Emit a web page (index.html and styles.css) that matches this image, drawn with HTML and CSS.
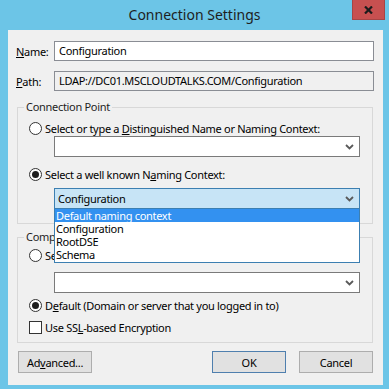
FILE: index.html
```html
<!DOCTYPE html>
<html lang="en">
<head>
  <meta charset="UTF-8" />
  <title>Connection Settings</title>
  <link rel="stylesheet" href="styles.css">
</head>
<body>

  <div class="window">
    <div class="titlebar">
      <span class="title">Connection Settings</span>
      <div class="close-btn">
        <svg width="9" height="8" viewBox="0 0 9 8"><path d="M1 0.5 L8 7.5 M8 0.5 L1 7.5" stroke="#1b1b1b" stroke-width="2.2" fill="none"/></svg>
      </div>
    </div>

    <div class="client">
      <div class="field-row">
        <span class="field-label"><u>N</u>ame:</span>
        <div class="textbox">Configuration</div>
      </div>
      <div class="field-row">
        <span class="field-label"><u>P</u>ath:</span>
        <div class="textbox readonly">LDAP://DC01.MSCLOUDTALKS.COM/Configuration</div>
      </div>

      <fieldset class="group group-top">
        <legend>Connection Point</legend>
        <div class="option opt-1">
          <span class="radio"></span>
          <span>Select or type a <u>D</u>istinguished Name or Naming Context:</span>
        </div>
        <div class="combo combo-1">
          <span></span>
          <svg class="chevron" width="9" height="6" viewBox="0 0 9 6"><path d="M1 1 L4.5 4.5 L8 1" stroke="#5a5a5a" stroke-width="1.8" fill="none"/></svg>
        </div>
        <div class="option opt-2">
          <span class="radio checked"></span>
          <span>Select a well known N<u>a</u>ming Context:</span>
        </div>
        <div class="combo-wrap">
          <div class="combo active">
            <span>Configuration</span>
            <svg class="chevron" width="9" height="6" viewBox="0 0 9 6"><path d="M1 1 L4.5 4.5 L8 1" stroke="#5a5a5a" stroke-width="1.8" fill="none"/></svg>
          </div>
          <ul class="dropdown">
            <li class="selected">Default naming context</li>
            <li>Configuration</li>
            <li>RootDSE</li>
            <li>Schema</li>
          </ul>
        </div>
      </fieldset>

      <fieldset class="group group-bottom">
        <legend>Computer</legend>
        <div class="option opt-3">
          <span class="radio"></span>
          <span>Select or type a domain or server:</span>
        </div>
        <div class="combo combo-3">
          <span></span>
          <svg class="chevron" width="9" height="6" viewBox="0 0 9 6"><path d="M1 1 L4.5 4.5 L8 1" stroke="#5a5a5a" stroke-width="1.8" fill="none"/></svg>
        </div>
        <div class="option opt-4">
          <span class="radio checked"></span>
          <span>D<u>e</u>fault (Domain or server that you logged in to)</span>
        </div>
        <div class="option opt-5">
          <span class="checkbox"></span>
          <span>Use SS<u>L</u>-based Encryption</span>
        </div>
      </fieldset>

      <div class="button-row">
        <button class="btn">Ad<u>v</u>anced...</button>
        <button class="btn btn-default">OK</button>
        <button class="btn">Cancel</button>
      </div>
    </div>
  </div>

</body>
</html>
```

FILE: styles.css
```css
body {
  margin: 0;
  background: #6cc5e7;
  font-family: 'Noto Sans', sans-serif;
  font-size: 11px;
  letter-spacing: -0.3px;
  color: #000;
}

.window {
  width: 389px;
  height: 389px;
  overflow: hidden;
}

.titlebar {
  position: relative;
  height: 30px;
  display: flex;
  align-items: center;
  justify-content: center;
}

.title {
  font-size: 14px;
  letter-spacing: 0;
  color: #1e1e1e;
  margin-top: -1px;
}

.close-btn {
  position: absolute;
  top: 0;
  right: 4px;
  width: 33px;
  height: 20px;
  box-sizing: border-box;
  background: #c75050;
  border: 1px solid #a64545;
  border-top: none;
  display: flex;
  align-items: center;
  justify-content: center;
}

.client {
  margin: 0 6px 0 8px;
  height: 355px;
  box-sizing: border-box;
  background: #f0f0f0;
  padding: 11px 9px 0 8px;
}

.field-row {
  display: flex;
  align-items: center;
  height: 20px;
  margin-top: 10px;
}

.field-row:first-child {
  margin-top: 0;
}

.field-label {
  width: 38px;
}

.textbox {
  flex: 1;
  height: 20px;
  box-sizing: border-box;
  border: 1px solid #8a8d94;
  background: #fff;
  padding: 0 4px;
  line-height: 18px;
}

.textbox.readonly {
  background: #f0f0f0;
}

.group {
  margin: 8px 1px 0 1px;
  padding: 0 12px 0 11px;
  border: 1px solid #d8d8d8;
  min-width: 0;
}

.group legend {
  margin-left: -5px;
  padding: 0 2px;
  line-height: 16px;
  color: #1e1e1e;
}

.group-top {
  padding-bottom: 14px;
}

.group-bottom {
  margin-top: 5px;
  padding-bottom: 7px;
}

.option {
  display: flex;
  align-items: center;
  gap: 3px;
  height: 16px;
  white-space: nowrap;
}

.opt-1 { margin-top: 5px; }
.opt-2 { margin-top: 9px; }
.opt-3 { margin-top: 2px; }
.opt-4 { margin-top: 4px; }
.opt-5 { margin-top: 6px; }

.radio {
  width: 13px;
  height: 13px;
  flex-shrink: 0;
  box-sizing: border-box;
  border: 1px solid #333;
  border-radius: 50%;
  background: #fff;
  display: flex;
  align-items: center;
  justify-content: center;
}

.radio.checked::after {
  content: "";
  width: 7px;
  height: 7px;
  border-radius: 50%;
  background: #1e1e1e;
}

.checkbox {
  width: 13px;
  height: 13px;
  flex-shrink: 0;
  box-sizing: border-box;
  border: 1px solid #333;
  background: #fff;
}

.combo {
  height: 21px;
  box-sizing: border-box;
  border: 1px solid #7a7a7a;
  background: #fff;
  display: flex;
  align-items: center;
  justify-content: space-between;
  padding: 0 5px 0 3px;
}

.combo-1,
.combo-3,
.combo-wrap {
  margin-left: 25px;
}

.combo-3 {
  margin-top: 9px;
}

.combo-wrap {
  position: relative;
  margin-top: 6px;
}

.combo.active {
  background: #c7e4f6;
  border-color: #3c7fb1;
}

.dropdown {
  position: absolute;
  left: 0;
  right: 0;
  top: calc(100% - 1px);
  z-index: 2;
  margin: 0;
  padding: 0 0 1px;
  list-style: none;
  background: #fff;
  border: 1px solid #3c7fb1;
}

.dropdown li {
  line-height: 13px;
  height: 13px;
  padding-left: 1px;
}

.dropdown li.selected {
  background: #3391f0;
  color: #fff;
}

.button-row {
  display: flex;
  margin: 8px 1px 0 2px;
}

.btn {
  width: 74px;
  height: 22px;
  box-sizing: border-box;
  background: #e1e1e1;
  border: 1px solid #adadad;
  font-family: 'Noto Sans', sans-serif;
  font-size: 11px;
  letter-spacing: -0.3px;
  color: #000;
  padding: 0;
}

.btn-default {
  margin-left: auto;
  margin-right: 13px;
  border-color: #4f7fae;
}
```
